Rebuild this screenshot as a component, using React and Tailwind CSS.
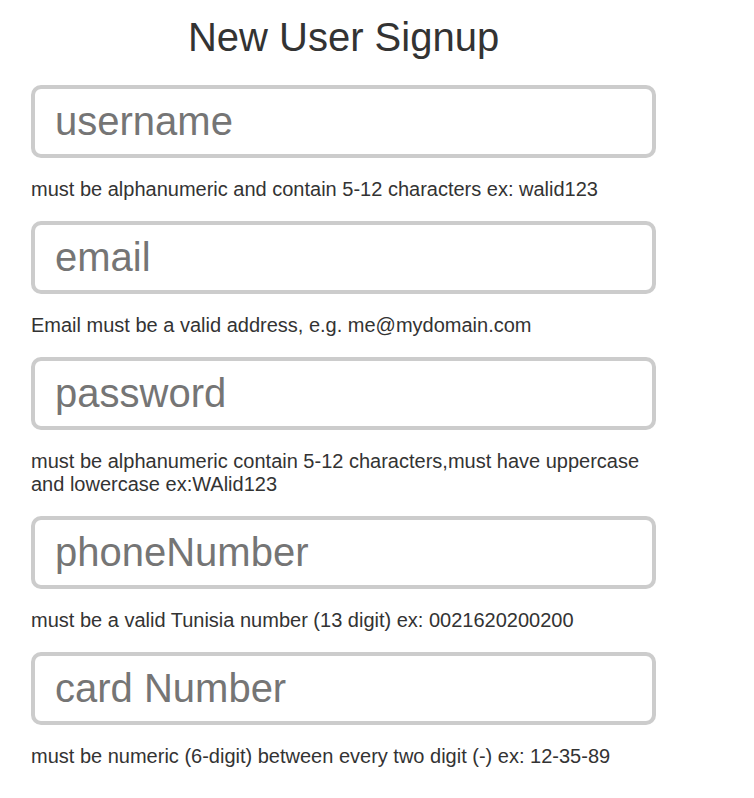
import React from "react"

const fields = [
  {
    name: "username",
    hint: "must be alphanumeric and contain 5-12 characters ex: walid123",
  },
  {
    name: "email",
    hint: "Email must be a valid address, e.g. me@mydomain.com",
  },
  {
    name: "password",
    hint: "must be alphanumeric contain 5-12 characters,must have uppercase and lowercase ex:WAlid123",
  },
  {
    name: "phoneNumber",
    hint: "must be a valid Tunisia number (13 digit) ex: 0021620200200",
  },
  {
    name: "card Number",
    hint: "must be numeric (6-digit) between every two digit (-) ex: 12-35-89",
  },
]

const Field = ({ name, hint }) => (
  <div className="flex flex-col">
    <input
      type="text"
      placeholder={name}
      className="h-[73px] w-full rounded-[10px] border-4 border-[#cccccc] bg-white px-[20px] text-[40px] text-[#333] outline-none placeholder:text-[#757575]"
    />
    <p className="mt-[20px] mb-[20px] text-[20px] leading-[23px]">{hint}</p>
  </div>
)

export default function App() {
  return (
    <div className="min-h-[798px] w-[754px] bg-white font-['Liberation_Sans',Arial,sans-serif] text-[#333]">
      <div className="ml-[31px] w-[625px] pt-[14px]">
        <h1 className="text-center text-[40px] leading-[46px] font-normal">
          New User Signup
        </h1>
        <form className="mt-[25px] flex flex-col">
          {fields.map((f) => (
            <Field key={f.name} {...f} />
          ))}
        </form>
      </div>
    </div>
  )
}
